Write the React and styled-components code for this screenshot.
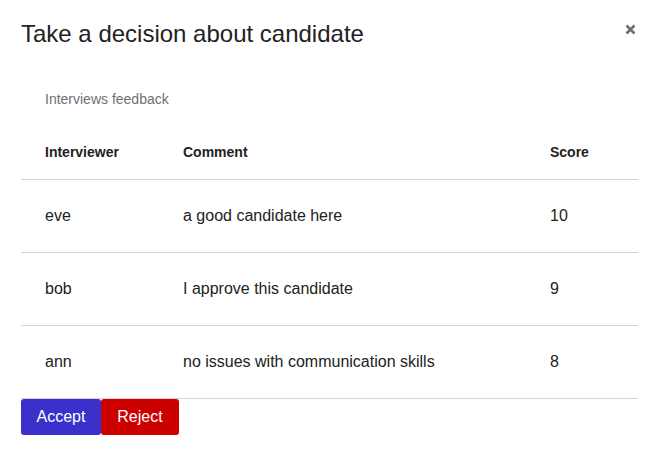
import styled, { createGlobalStyle } from 'styled-components';

const GlobalStyle = createGlobalStyle`
  body {
    margin: 0;
    background: #fff;
    font-family: "Liberation Sans", Arial, sans-serif;
    color: #222;
  }
`;

const rows = [
  { name: 'eve', comment: 'a good candidate here', score: 10 },
  { name: 'bob', comment: 'I approve this candidate', score: 9 },
  { name: 'ann', comment: 'no issues with communication skills', score: 8 },
];

function App() {
  return (
    <>
      <GlobalStyle />
      <Dialog>
        <Header>
          <Title>Take a decision about candidate</Title>
          <Close aria-label="close">
            <svg width="11" height="11" viewBox="0 0 11 11">
              <path d="M1.5 1.5 L9.5 9.5 M9.5 1.5 L1.5 9.5" stroke="#6e6e78" strokeWidth="2.6" strokeLinecap="butt" />
            </svg>
          </Close>
        </Header>
        <Caption>Interviews feedback</Caption>
        <Table>
          <HeadRow>
            <HeadCell>Interviewer</HeadCell>
            <HeadCell>Comment</HeadCell>
            <HeadCell>Score</HeadCell>
          </HeadRow>
          {rows.map((r) => (
            <Row key={r.name}>
              <Cell>{r.name}</Cell>
              <Cell>{r.comment}</Cell>
              <Cell>{r.score}</Cell>
            </Row>
          ))}
        </Table>
        <Actions>
          <Button $bg="#3b30cc" $w={80}>Accept</Button>
          <Button $bg="#cc0000" $w={78}>Reject</Button>
        </Actions>
      </Dialog>
    </>
  );
}

export default App;

const Dialog = styled.div`
  width: 617px;
  padding: 0 25px 0 21px;
`;

const Header = styled.div`
  display: flex;
  justify-content: space-between;
  align-items: flex-start;
  padding-top: 16px;
`;

const Title = styled.h2`
  margin: 0;
  font-size: 24px;
  font-weight: 400;
  line-height: 36px;
  color: #222;
`;

const Close = styled.button`
  border: 0;
  background: none;
  padding: 0;
  margin: 8px 2px 0 0;
  width: 11px;
  height: 11px;
  display: flex;
  cursor: pointer;
`;

const Caption = styled.div`
  margin-top: 37px;
  padding: 0 24px;
  font-size: 14px;
  line-height: 20px;
  color: #707078;
`;

const Table = styled.div`
  margin-top: 16px;
`;

const HeadRow = styled.div`
  display: grid;
  grid-template-columns: 138px 367px 112px;
  border-bottom: 1px solid #d4d4d4;
  height: 54px;
  align-items: center;
`;

const HeadCell = styled.div`
  padding: 0 24px;
  font-size: 14px;
  font-weight: 700;
  color: #222;
`;

const Row = styled(HeadRow)`
  height: 72px;
`;

const Cell = styled.div`
  padding: 0 24px;
  font-size: 16px;
  color: #222;
`;

const Actions = styled.div`
  display: flex;
`;

const Button = styled.button`
  background: ${(p) => p.$bg};
  width: ${(p) => p.$w}px;
  color: #fff;
  border: 0;
  border-radius: 3px;
  height: 36px;
  padding: 0;
  font-family: "Liberation Sans", Arial, sans-serif;
  font-size: 16px;
  cursor: pointer;
`;
